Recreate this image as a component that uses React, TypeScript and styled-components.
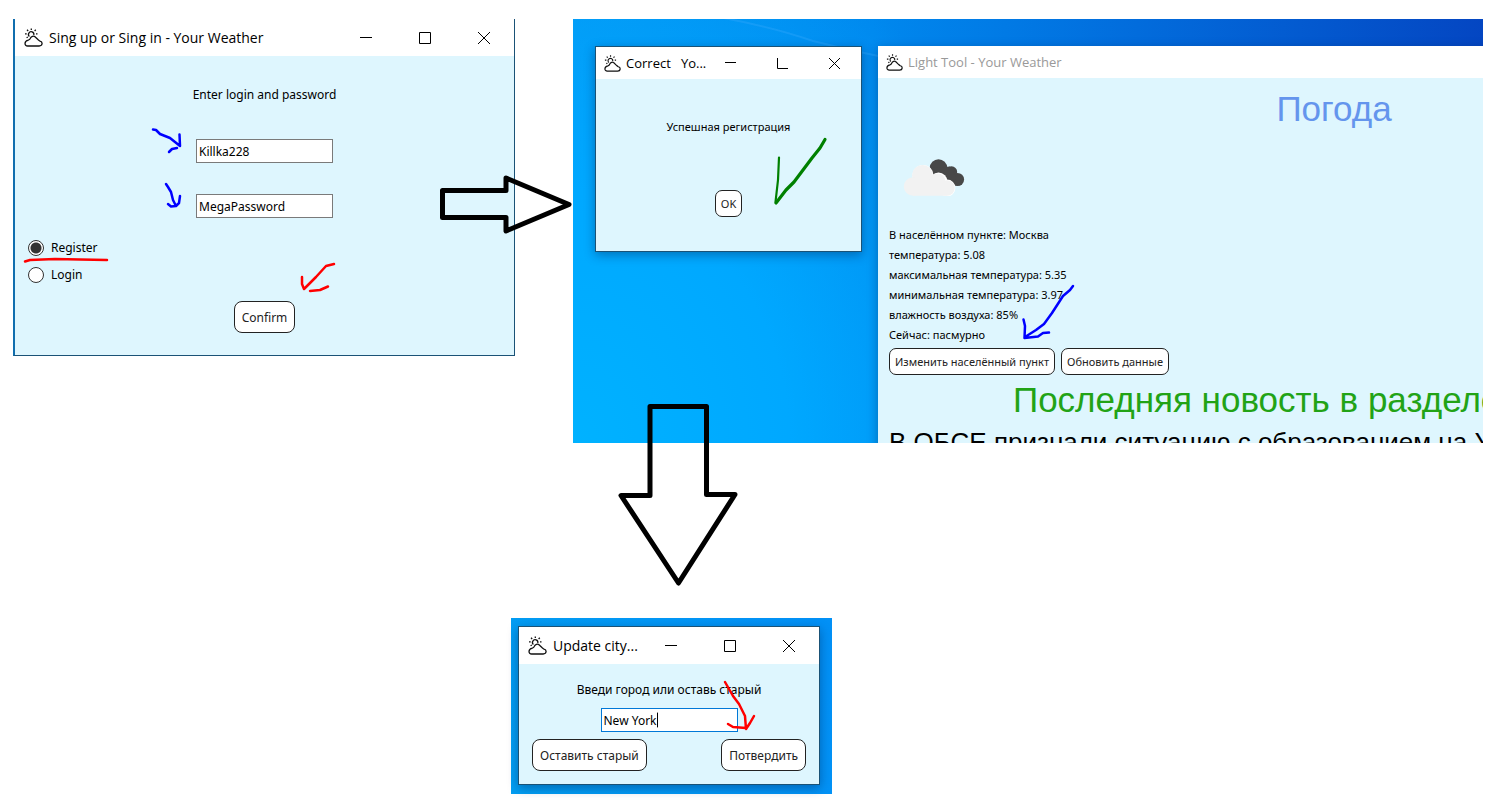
import React from "react";
import styled, { createGlobalStyle } from "styled-components";

const GlobalStyle = createGlobalStyle`
  * { box-sizing: border-box; }
  body { margin: 0; background: #fff; color: #000; font-family: "Noto Sans", "Open Sans", sans-serif; }
  button, input { font-family: inherit; color: inherit; margin: 0; }
  h1, h2, p { margin: 0; font-weight: 400; }
`;

const Board = styled.main`
  position: relative;
  padding: 19px 2px 14px 13px;
  overflow: hidden;
`;

const TopRow = styled.div`
  display: flex;
  align-items: flex-start;
  gap: 58px;
`;

const Desktop = styled.section`
  position: relative;
  flex: 1;
  min-width: 0;
  height: 424px;
  overflow: hidden;
  background:
    radial-gradient(ellipse 480px 560px at 0% 100%, #00b2ff 0%, #00a8ff 45%, rgba(0, 160, 255, 0) 100%),
    linear-gradient(90deg, #0496f2 0%, #0088ee 33%, #026cdc 62%, #0446c2 100%);
`;

const Beam = styled.svg`
  position: absolute;
  left: 0;
  top: 0;
`;

const SmallDesktop = styled.section`
  width: 321px;
  margin: 175px 0 0 498px;
  padding: 8px 12px 9px 7px;
  background: linear-gradient(75deg, #029ef2 0%, #0398f6 50%, #0290f6 100%);
`;

const Window = styled.article<{ $shadow?: boolean }>`
  border: 1px solid #1a5276;
  background: #def6fe;
  font-size: 12px;
  line-height: 16px;
  box-shadow: ${(p) => (p.$shadow ? "0 3px 10px rgba(0, 30, 80, 0.4)" : "none")};
`;

const AuthWindow = styled(Window)`
  width: 502px;
  flex: none;
  border-top: 0;
  border-left: 2px solid #106eae;
`;

const NoticeWindow = styled(Window)`
  position: absolute;
  left: 22px;
  top: 27px;
  width: 267px;
  height: 206px;
  font-size: 11px;
`;

const WeatherWindow = styled(Window)`
  position: absolute;
  left: 305px;
  top: 27px;
  width: 912px;
  height: 440px;
  border: 0;
  font-size: 11px;
`;

const TitleBar = styled.header<{ $compact?: boolean; $muted?: boolean }>`
  display: flex;
  align-items: center;
  gap: ${(p) => (p.$compact ? 5 : 6)}px;
  height: ${(p) => (p.$compact ? 32 : 37)}px;
  padding: ${(p) => (p.$compact ? "0 21px 0 8px" : "0 24px 0 9px")};
  background: #fff;
  color: ${(p) => (p.$muted ? "#999" : "#000")};
`;

const TitleText = styled.span<{ $compact?: boolean }>`
  flex: 1;
  font-family: "Open Sans", "Noto Sans", sans-serif;
  font-size: ${(p) => (p.$compact ? 13 : 14)}px;
  line-height: 20px;
  white-space: pre;
`;

const Controls = styled.div<{ $compact?: boolean }>`
  display: flex;
  gap: ${(p) => (p.$compact ? 41 : 47)}px;
`;

const ControlButton = styled.button`
  display: flex;
  padding: 0;
  border: 0;
  background: none;
`;

const AuthForm = styled.form`
  display: flex;
  flex-direction: column;
  align-items: center;
  padding: 31px 13px 22px;
`;

const Fields = styled.div`
  display: flex;
  flex-direction: column;
  gap: 31px;
  margin-top: 36px;
`;

const TextField = styled.input<{ $active?: boolean }>`
  width: 137px;
  height: 24px;
  padding: 0 2px;
  border: 1px solid ${(p) => (p.$active ? "#0078d7" : "#7a7a7a")};
  border-radius: 0;
  background: #fff;
  font-size: 12px;
  outline: none;
`;

const Choices = styled.div`
  display: flex;
  flex-direction: column;
  align-self: stretch;
  gap: 11px;
  margin: 22px 0 18px;
`;

const Choice = styled.label`
  display: flex;
  align-items: center;
  align-self: flex-start;
  gap: 7px;
`;

const Radio = styled.input`
  appearance: none;
  width: 16px;
  height: 16px;
  border: 1px solid #333;
  border-radius: 50%;
  background: #fff;
  &:checked { background: radial-gradient(circle, #333 0 5px, #fff 6px); }
`;

const PushButton = styled.button<{ $small?: boolean }>`
  height: ${(p) => (p.$small ? 27 : 32)}px;
  padding: 0 ${(p) => (p.$small ? 5 : 7)}px;
  border: 1px solid #222;
  border-radius: ${(p) => (p.$small ? 7 : 8)}px;
  background: #fff;
  color: #222;
  font-size: ${(p) => (p.$small ? 11 : 12)}px;
  white-space: nowrap;
`;

const NoticeBody = styled.div`
  display: flex;
  flex-direction: column;
  align-items: center;
  gap: 55px;
  padding-top: 40px;
`;

const WeatherBody = styled.div`
  padding: 11px 11px 0;
`;

const WeatherHeading = styled.h1`
  color: #6495ed;
  font-family: "Liberation Sans", Arial, sans-serif;
  font-size: 35px;
  line-height: 40px;
  text-align: center;
`;

const CloudPicture = styled.svg`
  display: block;
  margin: 27px 0 29px 11px;
`;

const Reading = styled.p`
  line-height: 20px;
`;

const WeatherActions = styled.div`
  display: flex;
  gap: 6px;
  margin: 3px 0 5px;
`;

const NewsHeading = styled.h2`
  padding-left: 124px;
  color: #22a316;
  font-family: "Liberation Sans", Arial, sans-serif;
  font-size: 35px;
  line-height: 40px;
  white-space: nowrap;
`;

const NewsLead = styled.p`
  margin-top: 6px;
  font-family: "Liberation Sans", Arial, sans-serif;
  font-size: 26px;
  line-height: 32px;
  white-space: nowrap;
`;

const CityForm = styled.form`
  display: flex;
  flex-direction: column;
  align-items: center;
  padding: 18px 13px 13px;
`;

const CityField = styled(TextField)`
  margin: 10px 0 7px;
`;

const CityActions = styled.div`
  display: flex;
  justify-content: space-between;
  align-self: stretch;
`;

const Annotations = styled.svg`
  position: absolute;
  left: 0;
  top: 0;
  pointer-events: none;
`;

function WeatherIcon({ size }: { size: number }) {
  return (
    <svg width={size} height={size} viewBox="0 0 19 19" fill="none" stroke="#111" strokeWidth="1.3" aria-hidden="true">
      <path d="M3.600 18H15.200C18.700 18 19 13.700 16 13.100C15.400 12.900 15 12.500 14.200 11.800L11 8.700C9.500 7.500 7.300 8.300 6.500 10.100C6 11.500 5.400 11.900 4.300 12.200C-.2 13.300 .3 18 3.600 18Z" />
      <path d="M5.400 8.500A2.700 2.700 0 1 1 9.800 7" />
      <path d="M7.300.4v1.500M3 1.800l1.200 1.200M11.800 1.800l-1.200 1.200M1 5.800h1.700M12 5.800h1.500M2.600 9.800l1.200-.8" />
    </svg>
  );
}

interface BarProps {
  title: string;
  compact?: boolean;
  controls?: boolean;
  muted?: boolean;
  partialMax?: boolean;
}

function WindowBar({ title, compact, controls, muted, partialMax }: BarProps) {
  const s = compact ? 11 : 12;
  const mid = Math.floor(s / 2) - 0.5;
  const end = s - 0.5;
  return (
    <TitleBar $compact={compact} $muted={muted}>
      <WeatherIcon size={compact ? 17 : 19} />
      <TitleText $compact={compact}>{title}</TitleText>
      {controls && (
        <Controls $compact={compact}>
          <ControlButton type="button" aria-label="Minimize">
            <svg width={s} height={s} stroke="#000"><path d={`M0 ${mid}H${s}`} /></svg>
          </ControlButton>
          <ControlButton type="button" aria-label="Maximize">
            <svg width={s} height={s} stroke="#000" fill="none">
              <path d={partialMax ? `M.5 0V${end}H${s}` : `M.5 .5H${end}V${end}H.5Z`} />
            </svg>
          </ControlButton>
          <ControlButton type="button" aria-label="Close">
            <svg width={s} height={s} stroke="#000"><path d={`M0 0L${s} ${s}M${s} 0L0 ${s}`} /></svg>
          </ControlButton>
        </Controls>
      )}
    </TitleBar>
  );
}

const readings = [
  "В населённом пункте: Москва",
  "температура: 5.08",
  "максимальная температура: 5.35",
  "минимальная температура: 3.97",
  "влажность воздуха: 85%",
  "Сейчас: пасмурно",
];

export default function App() {
  return (
    <Board>
      <GlobalStyle />
      <TopRow>
        <AuthWindow>
          <WindowBar title="Sing up or Sing in - Your Weather" controls />
          <AuthForm>
            <p>Enter login and password</p>
            <Fields>
              <TextField aria-label="Login" defaultValue="Killka228" />
              <TextField aria-label="Password" defaultValue="MegaPassword" />
            </Fields>
            <Choices>
              <Choice><Radio type="radio" name="mode" defaultChecked />Register</Choice>
              <Choice><Radio type="radio" name="mode" />Login</Choice>
            </Choices>
            <PushButton type="button">Confirm</PushButton>
          </AuthForm>
        </AuthWindow>

        <Desktop>
          <Beam width="320" height="60" fill="none" stroke="#2ba4fa" strokeOpacity=".45" strokeWidth="2">
            <path d="M145 -2Q200 8 240 22Q275 31 310 38" />
          </Beam>
          <WeatherWindow $shadow>
            <WindowBar title="Light Tool - Your Weather" compact muted />
            <WeatherBody>
              <WeatherHeading>Погода</WeatherHeading>
              <CloudPicture width="66" height="40" viewBox="0 6 66 40" role="img" aria-label="Пасмурно">
                <g fill="#484848">
                  <circle cx="38.500" cy="18" r="8.700" />
                  <circle cx="51.500" cy="22" r="5.700" />
                  <circle cx="57.500" cy="29.500" r="6.600" />
                  <path d="M33 18L50 16.500L56 26L54 36H46Z" />
                </g>
                <g fill="#fff">
                  <circle cx="23" cy="25.500" r="10.600" />
                  <circle cx="38.500" cy="31.500" r="9" />
                  <circle cx="47" cy="38" r="8.400" />
                </g>
                <g fill="#f2f2f2">
                  <circle cx="22.500" cy="25.500" r="10.500" />
                  <circle cx="13" cy="36.500" r="9.200" />
                  <circle cx="37.500" cy="31.500" r="8" />
                  <circle cx="47" cy="38" r="7.700" />
                  <path d="M13 30H40L47 45.700H13Z" />
                </g>
              </CloudPicture>
              {readings.map((text) => <Reading key={text}>{text}</Reading>)}
              <WeatherActions>
                <PushButton $small type="button">Изменить населённый пункт</PushButton>
                <PushButton $small type="button">Обновить данные</PushButton>
              </WeatherActions>
              <NewsHeading>Последняя новость в разделе</NewsHeading>
              <NewsLead>В ОБСЕ признали ситуацию с образованием на У</NewsLead>
            </WeatherBody>
          </WeatherWindow>
          <NoticeWindow $shadow>
            <WindowBar title="Correct   Yo..." compact controls partialMax />
            <NoticeBody>
              <p>Успешная регистрация</p>
              <PushButton $small type="button">OK</PushButton>
            </NoticeBody>
          </NoticeWindow>
        </Desktop>
      </TopRow>

      <SmallDesktop>
        <Window $shadow>
          <WindowBar title="Update city..." controls />
          <CityForm>
            <label htmlFor="city">Введи город или оставь старый</label>
            <CityField id="city" $active defaultValue="New York" />
            <CityActions>
              <PushButton type="button">Оставить старый</PushButton>
              <PushButton type="button">Потвердить</PushButton>
            </CityActions>
          </CityForm>
        </Window>
      </SmallDesktop>

      <Annotations width="1485" height="808" fill="none" strokeLinecap="round" strokeLinejoin="round" aria-hidden="true">
        <g stroke="#000" strokeWidth="5">
          <path d="M442.500 190.500H506V178L569 204.500L506 231V217.500H442.500Z" />
          <path d="M650 406.500H706.500V494.500H735L678.500 583L621 495.500H650Z" />
        </g>
        <path stroke="#000" strokeWidth="1" d="M657.500 713V727" />
        <g stroke="#00f" strokeWidth="2.500">
          <path d="M153 129.500L156 130L160 134L170 138L180 146M179.500 134.500L180 146M169 152L172 149L177 148" />
          <path d="M166 184L168 187L171 192L173 200L176 206M180 196L179 203L176 206L171 206.500L168 204" />
          <path d="M1073 286L1070 290L1063 296L1052 313L1044 324L1036 330L1025 337M1023.500 319.500L1025 326L1024.500 338L1038 336.500L1043 333L1049 332.500" />
        </g>
        <g stroke="#f00" strokeWidth="2.500">
          <path d="M25 261.500L30 260L55 259L80 259.500L107 260" />
          <path d="M334 264L326 266L316 277L304 289M302 277L302 284L304 289M310 291L320 290L328 286.500" />
          <path d="M725 682L733 696L739 704L745 716L746 729M754 716L750 723L746 729M728 724L733 727L746 728" />
        </g>
        <g stroke="#008000">
          <path strokeWidth="2.200" d="M779 157.500L778 180L775.500 202" />
          <path strokeWidth="3.200" d="M776 203L786 190L794 182L806 166L812 158L820 148L825 139.500" />
        </g>
      </Annotations>
    </Board>
  );
}
